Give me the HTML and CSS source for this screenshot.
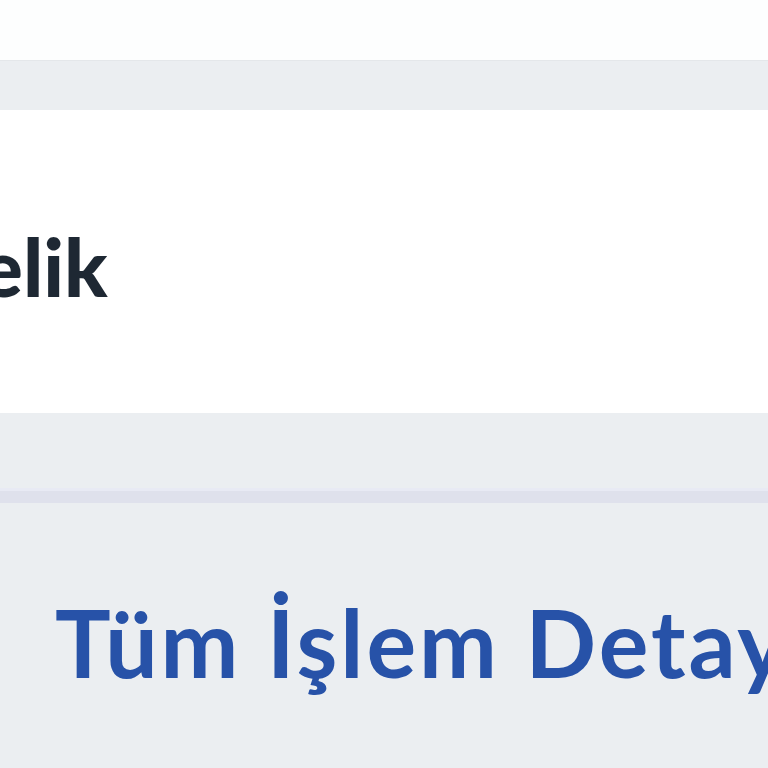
FILE: index.html
```html
<!DOCTYPE html>
<html lang="tr">
<head>
<meta charset="utf-8">
<link rel="stylesheet" href="styles.css">
</head>
<body>
  <div class="top"></div>
  <div class="band"></div>
  <section class="card">
    <h2 class="card-title">elik</h2>
  </section>
  <div class="gap"></div>
  <div class="divider"></div>
  <section class="details">
    <h1 class="details-title">Tüm İşlem Detayları</h1>
  </section>
</body>
</html>
```
FILE: styles.css
```css
html, body {
  margin: 0;
  padding: 0;
  width: 768px;
  height: 768px;
  overflow: hidden;
  background: #ebeef1;
  font-family: "Lato", "Liberation Sans", sans-serif;
}
.top {
  height: 60px;
  background: #fdfefe;
}
.band {
  height: 50px;
  background: #ebeef1;
  border-top: 1px solid #e4e7ea;
  box-sizing: border-box;
}
.card {
  height: 303px;
  background: #ffffff;
  box-sizing: border-box;
  padding-top: 116px;
}
.card-title {
  margin: 0;
  font-size: 80px;
  line-height: 80px;
  font-weight: 900;
  color: #1e2833;
  text-indent: -20px;
  white-space: nowrap;
}
.gap {
  height: 75px;
  background: #ebeef1;
}
.divider {
  height: 15px;
  background: #dfe1ec;
  border-top: 3px solid #e8eaf4;
  box-sizing: border-box;
}
.details {
  height: 265px;
  background: #ebeef1;
  box-sizing: border-box;
  padding: 93px 0 0 55px;
}
.details-title {
  margin: 0;
  font-size: 93px;
  line-height: 93px;
  font-weight: 700;
  letter-spacing: 3px;
  color: #2752a8;
  white-space: nowrap;
}
```
